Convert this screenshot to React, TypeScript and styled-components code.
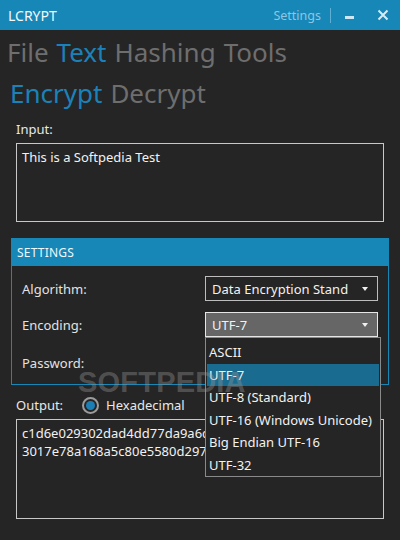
import React from 'react';
import styled, { createGlobalStyle } from 'styled-components';

const GlobalStyle = createGlobalStyle`
  html, body {
    margin: 0;
    padding: 0;
    background: #252525;
  }
  body {
    font-family: "Segoe UI", "Noto Sans", sans-serif;
    color: #e6e6e6;
  }
`;

const Window = styled.div`
  position: relative;
  width: 400px;
  height: 540px;
  overflow: hidden;
  background: #252525;
  display: flex;
  flex-direction: column;
`;

const TitleBar = styled.div`
  height: 30px;
  background: #1687b7;
  display: flex;
  align-items: center;
  padding: 0 7px 0 8px;
  flex-shrink: 0;
`;

const AppName = styled.div`
  font-size: 14px;
  color: #f4f9fc;
  flex: 1;
`;

const TitleLink = styled.div`
  font-size: 12.5px;
  color: #8cc6e3;
  padding-right: 9px;
`;

const Divider = styled.div`
  width: 1px;
  height: 15px;
  background: #5faed3;
  margin-right: 8px;
`;

const WinButton = styled.div`
  width: 20px;
  height: 20px;
  display: flex;
  align-items: center;
  justify-content: center;
  & + & {
    margin-left: 14px;
  }
`;

const MenuBar = styled.div<{ $top: number; $pad: number }>`
  display: flex;
  gap: 8px;
  padding-left: ${p => p.$pad}px;
  margin-top: ${p => p.$top}px;
  font-size: 26px;
  line-height: 34px;
  height: 34px;
`;

const MenuItem = styled.div<{ $active?: boolean }>`
  color: ${p => (p.$active ? '#1b82b9' : '#6e6e6e')};
`;

const Content = styled.div`
  padding: 0 16px;
  display: flex;
  flex-direction: column;
`;

const FieldLabel = styled.div`
  font-size: 13px;
  color: #e8e8e8;
  height: 24px;
  line-height: 24px;
  margin: 7px 0 2px;
`;

const TextBox = styled.div<{ $height: number }>`
  height: ${p => p.$height}px;
  border: 1px solid #c8c8c8;
  padding: 4px 5px;
  box-sizing: border-box;
  font-size: 13px;
  line-height: 18px;
  color: #f2f2f2;
  white-space: pre;
  overflow: hidden;
`;

const OutputBox = styled(TextBox)`
  margin-top: 2px;
`;

const Panel = styled.div`
  margin: 16px -5px 0;
  border: 1px solid #1687b7;
  height: 147px;
  box-sizing: border-box;
  display: flex;
  flex-direction: column;
`;

const PanelHeader = styled.div`
  height: 27px;
  background: #1687b7;
  color: #f0f7fb;
  font-size: 12px;
  line-height: 27px;
  padding-left: 5px;
  letter-spacing: 0.2px;
`;

const PanelBody = styled.div`
  padding: 10px 10px 0;
  display: grid;
  grid-template-columns: 1fr 173px;
  row-gap: 11px;
  align-items: center;
`;

const RowLabel = styled.div`
  font-size: 13px;
  color: #e2e2e2;
`;

const SelectWrap = styled.div`
  position: relative;
  height: 25px;
`;

const Select = styled.div<{ $open?: boolean }>`
  height: 25px;
  box-sizing: border-box;
  border: 1px solid ${p => (p.$open ? '#e6e6e6' : '#bdbdbd')};
  background: ${p => (p.$open ? '#666666' : '#252525')};
  display: flex;
  align-items: center;
  padding: 0 8px 0 6px;
  font-size: 13px;
  color: #f2f2f2;
`;

const SelectText = styled.div`
  flex: 1;
  white-space: nowrap;
  overflow: hidden;
`;

const Arrow = styled.div`
  width: 0;
  height: 0;
  border-left: 3.5px solid transparent;
  border-right: 3.5px solid transparent;
  border-top: 4px solid #f0f0f0;
  margin-right: 1px;
`;

const DropList = styled.div`
  position: absolute;
  top: 25px;
  left: 0;
  width: 176px;
  height: 140px;
  box-sizing: border-box;
  background: #252525;
  border: 1px solid #8a8a8a;
  padding: 3px 1px 0;
  z-index: 5;
`;

const DropItem = styled.div<{ $selected?: boolean }>`
  height: 22.5px;
  line-height: 22.5px;
  padding-left: 2px;
  font-size: 13px;
  color: #f2f2f2;
  white-space: nowrap;
  background: ${p => (p.$selected ? '#196b90' : 'transparent')};
`;

const PasswordRow = styled.div`
  height: 25px;
  display: flex;
  align-items: center;
  padding-top: 2px;
`;

const OutputRow = styled.div`
  display: flex;
  align-items: center;
  height: 24px;
  margin-top: 8px;
`;

const Radio = styled.div`
  width: 17px;
  height: 17px;
  box-sizing: border-box;
  border-radius: 50%;
  border: 2px solid #9c9c9c;
  display: flex;
  align-items: center;
  justify-content: center;
  margin: 0 7px 0 19px;
  &::after {
    content: '';
    width: 9px;
    height: 9px;
    border-radius: 50%;
    background: #1b7fb5;
  }
`;

const RadioLabel = styled.div`
  font-size: 13px;
  color: #e8e8e8;
`;

const Watermark = styled.div`
  position: absolute;
  left: 78px;
  top: 366px;
  font-family: "Liberation Sans", "DejaVu Sans", sans-serif;
  font-weight: bold;
  font-size: 29px;
  letter-spacing: 0.2px;
  color: rgba(150, 150, 150, 0.4);
  pointer-events: none;
  z-index: 10;
`;

const encodings = ['ASCII', 'UTF-7', 'UTF-8 (Standard)', 'UTF-16 (Windows Unicode)', 'Big Endian UTF-16', 'UTF-32'];

export default function App() {
  return (
    <Window>
      <GlobalStyle />
      <TitleBar>
        <AppName>LCRYPT</AppName>
        <TitleLink>Settings</TitleLink>
        <Divider />
        <WinButton>
          <svg width="10" height="10" viewBox="0 0 10 10">
            <rect x="1" y="6" width="9" height="3" fill="#cfe6f3" />
          </svg>
        </WinButton>
        <WinButton>
          <svg width="12" height="12" viewBox="0 0 12 12">
            <path d="M1.5 1.5 L10.5 10.5 M10.5 1.5 L1.5 10.5" stroke="#d6ebf6" strokeWidth="2" />
          </svg>
        </WinButton>
      </TitleBar>

      <MenuBar $top={5} $pad={7}>
        <MenuItem>File</MenuItem>
        <MenuItem $active>Text</MenuItem>
        <MenuItem>Hashing</MenuItem>
        <MenuItem>Tools</MenuItem>
      </MenuBar>
      <MenuBar $top={7} $pad={10}>
        <MenuItem $active>Encrypt</MenuItem>
        <MenuItem>Decrypt</MenuItem>
      </MenuBar>

      <Content>
        <FieldLabel>Input:</FieldLabel>
        <TextBox $height={79}>This is a Softpedia Test</TextBox>

        <Panel>
          <PanelHeader>SETTINGS</PanelHeader>
          <PanelBody>
            <RowLabel>Algorithm:</RowLabel>
            <SelectWrap>
              <Select>
                <SelectText>Data Encryption Stand</SelectText>
                <Arrow />
              </Select>
            </SelectWrap>
            <RowLabel>Encoding:</RowLabel>
            <SelectWrap>
              <Select $open>
                <SelectText>UTF-7</SelectText>
                <Arrow />
              </Select>
              <DropList>
                {encodings.map(e => (
                  <DropItem key={e} $selected={e === 'UTF-7'}>{e}</DropItem>
                ))}
              </DropList>
            </SelectWrap>
            <PasswordRow>
              <RowLabel>Password:</RowLabel>
            </PasswordRow>
            <div />
          </PanelBody>
        </Panel>

        <OutputRow>
          <RadioLabel>Output:</RadioLabel>
          <Radio />
          <RadioLabel>Hexadecimal</RadioLabel>
        </OutputRow>
        <OutputBox $height={100}>
          {'c1d6e029302dad4dd77da9a6c5e1f0b3\n3017e78a168a5c80e5580d297ab4c8'}
        </OutputBox>
      </Content>
      <Watermark>SOFTPEDIA</Watermark>
    </Window>
  );
}
